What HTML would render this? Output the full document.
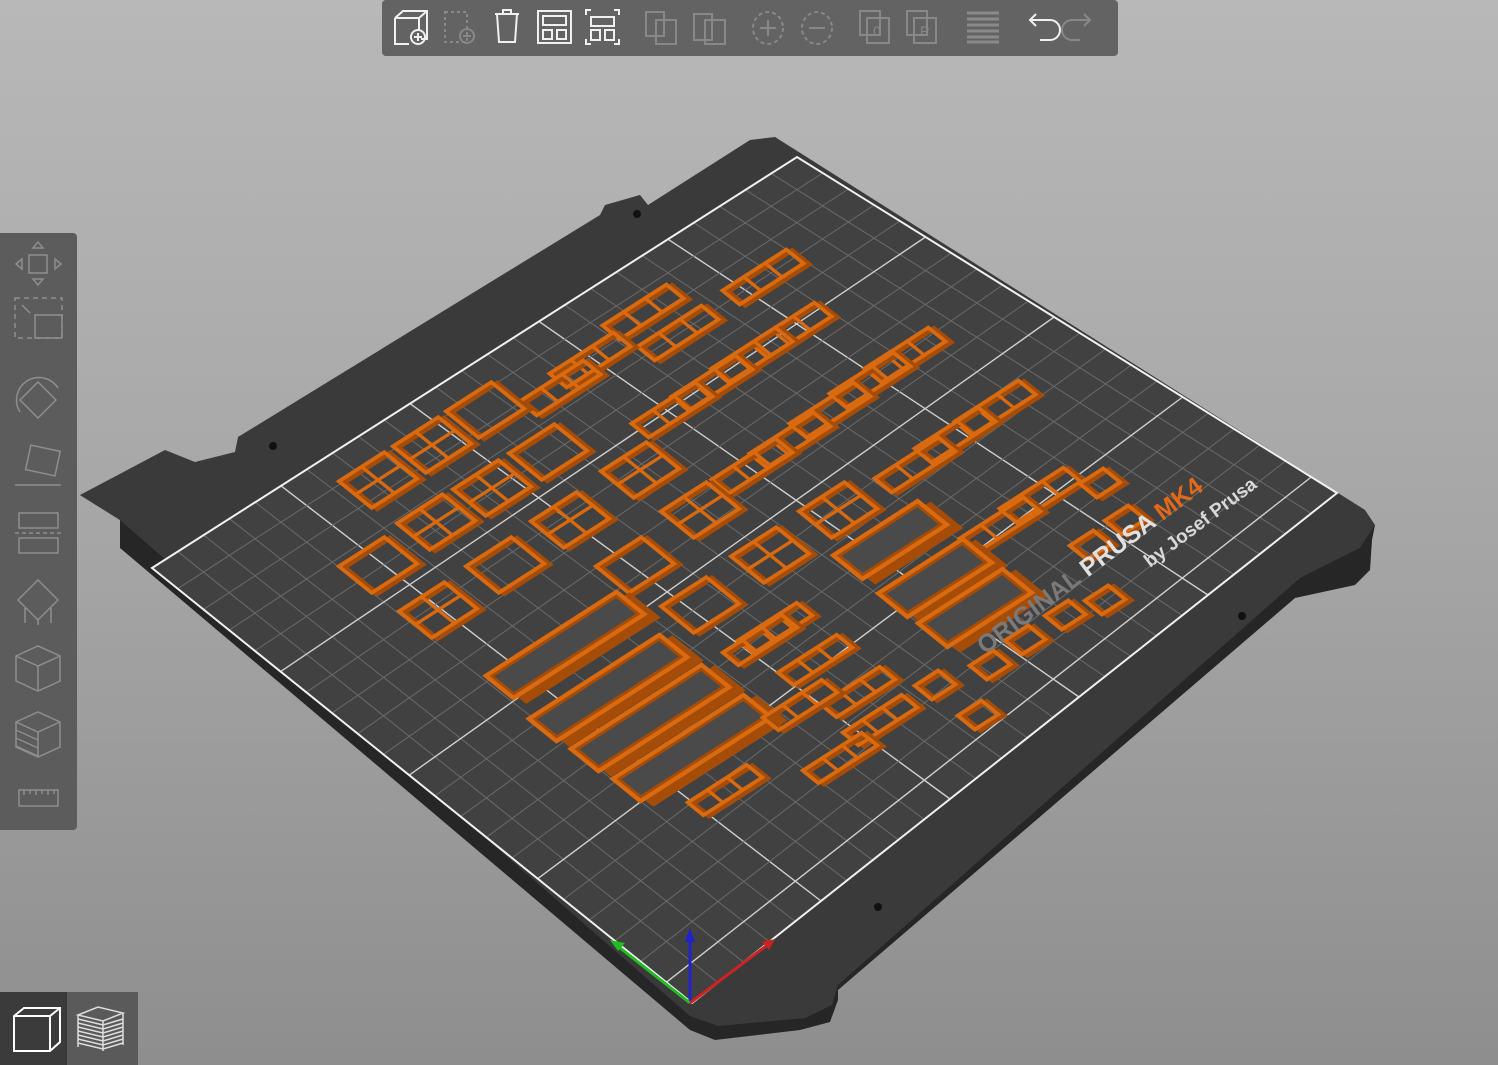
<!DOCTYPE html>
<html><head><meta charset="utf-8"><style>
html,body{margin:0;padding:0;width:1498px;height:1065px;overflow:hidden;font-family:"Liberation Sans",sans-serif}
body{background:linear-gradient(#b8b8b8,#a6a6a6 50%,#8e8e8e)}
svg{position:absolute;left:0;top:0}
</style></head><body>
<svg id="s" width="1498" height="1065" viewBox="0 0 1498 1065">
<polygon fill="#262626" points="80,495 120,520 120,548 690,1030 715,1040 800,1030 830,1022 838,1000 838,990 1295,598 1355,585 1370,570 1372,540 1375,525"/>
<polygon fill="#3a3a3a" points="80,495 165,450 195,462 235,452 238,437 600,215 605,205 640,195 648,205 750,140 775,137 1365,510 1375,525 1365,540 1360,548 1300,578 838,985 832,1005 805,1018 718,1026 690,1016 120,520"/>
<polygon id="print" fill="#414141" points="152,568 797,157 1337,493 692,1003"/>
<g id="grid"></g>
<g id="objs"></g>
<text x="0" y="0" transform="translate(985,655) rotate(-37)" font-size="25" font-weight="bold" fill="#7a7a7a">ORIGINAL <tspan fill="#e0e0e0">PRUSA </tspan><tspan fill="#e06a1a">MK4</tspan></text>
<text x="0" y="0" transform="translate(1150,568) rotate(-37)" font-size="19" font-weight="bold" fill="#d8d8d8">by Josef Prusa</text>
<circle cx="637" cy="214" r="4" fill="#111"/><circle cx="273" cy="446" r="4" fill="#111"/>
<circle cx="1242" cy="616" r="4" fill="#111"/><circle cx="878" cy="907" r="4" fill="#111"/>
<line x1="690" y1="1003" x2="690" y2="935" stroke="#2222cc" stroke-width="3"/><polygon points="690,928 685,942 695,942" fill="#2222cc"/>
<line x1="690" y1="1003" x2="615" y2="944" stroke="#22bb22" stroke-width="3"/><polygon points="610,940 625,943 618,951" fill="#22bb22"/>
<line x1="690" y1="1003" x2="770" y2="943" stroke="#cc2222" stroke-width="3"/><polygon points="775,939 762,942 769,950" fill="#cc2222"/>
<rect x="382" y="0" width="736" height="56" rx="4" fill="#636363"/>
<g fill="none" stroke="#f0f0f0" stroke-width="2">
<path d="M395 18 l8-7 h24 v28 l-6 0 M395 18 h24 l8-7 M419 18 v13 M395 18 v26 h14"/><circle cx="418" cy="37" r="7"/><path d="M414 37h8M418 33v8"/>
<path d="M495 14h24M503 14v-4h8v4M497 14l2 28h16l2-28"/>
<rect x="538" y="11" width="33" height="32"/><rect x="543" y="16" width="23" height="9"/><rect x="543" y="30" width="9" height="9"/><rect x="557" y="30" width="9" height="9"/>
<path d="M586 15v-5h5M614 10h5v5M586 39v5h5M614 44h5v-5"/><rect x="591" y="17" width="23" height="9"/><rect x="591" y="30" width="9" height="10"/><rect x="605" y="30" width="9" height="10"/>
<path d="M1030 20h20a10 10 0 0 1 0 20h-10M1036 14l-6 6 6 6"/>
</g>
<g fill="none" stroke="#888" stroke-width="2">
<rect x="445" y="12" width="22" height="30" stroke-dasharray="3 3"/><circle cx="467" cy="36" r="7"/><path d="M463 36h8"/>
<rect x="646" y="12" width="18" height="24"/><rect x="656" y="20" width="20" height="24"/>
<rect x="694" y="14" width="18" height="26"/><rect x="705" y="20" width="20" height="24"/>
<ellipse cx="768" cy="28" rx="15" ry="16" stroke-dasharray="4 3"/><path d="M760 28h16M768 20v16"/>
<ellipse cx="817" cy="28" rx="15" ry="16" stroke-dasharray="4 3"/><path d="M809 28h16"/>
<rect x="860" y="11" width="20" height="24"/><rect x="867" y="18" width="22" height="25"/>
<rect x="907" y="11" width="20" height="24"/><rect x="914" y="18" width="22" height="25"/>
<path d="M1090 20h-18a10 10 0 0 0 0 20h8M1084 14l6 6-6 6"/>
</g>
<g stroke="#8a8a8a" stroke-width="3"><path d="M967 13h32M967 19h32M967 25h32M967 31h32M967 37h32M967 42h32"/></g>
<text x="873" y="36" font-size="14" fill="#888">0</text><text x="920" y="36" font-size="14" fill="#888">P</text>
<rect x="-6" y="233" width="83" height="597" rx="4" fill="#5c5c5c"/>
<g fill="none" stroke="#8e8e8e" stroke-width="1.5">
<rect x="29" y="255" width="18" height="18"/><path d="M38 242l-5 6h10zM38 285l-5-6h10zM16 264l6-5v10zM61 264l-6-5v10z"/>
<rect x="15" y="298" width="47" height="40" stroke-dasharray="5 4"/><rect x="35" y="315" width="27" height="23"/><path d="M22 305l8 8"/>
<path d="M20 412a22 22 0 0 1 38-24"/><path d="M38 382l18 18-18 18-18-18z"/>
<rect x="28" y="448" width="30" height="25" transform="rotate(12 43 460)"/><path d="M15 485h46"/>
<rect x="19" y="513" width="39" height="15"/><rect x="19" y="538" width="39" height="15"/><path d="M15 533h47" stroke-dasharray="4 3"/>
<path d="M38 580l20 20-20 20-20-20zM25 608v15M38 620v5M51 608v15"/>
<path d="M16 656l22-10 22 10v25l-22 10-22-10zM16 656l22 10 22-10M38 666v25"/>
<path d="M16 722l22-10 22 10v25l-22 10-22-10zM16 722l22 10 22-10M38 732v25M16 730l22 10M16 738l22 10M16 746l22 10"/>
<rect x="19" y="790" width="39" height="16"/><path d="M24 790v5M30 790v4M36 790v5M42 790v4M48 790v5M54 790v4"/>
</g>
<rect x="0" y="992" width="138" height="73" fill="#5a5a5a"/><rect x="0" y="992" width="67" height="73" fill="#3b3b3b"/>
<g fill="none" stroke="#fff" stroke-width="2"><path d="M14 1016l10-8h36v34l-10 9H14zM14 1016h36l10-8M50 1016v35"/></g>
<g fill="none" stroke="#ddd" stroke-width="1.5"><path d="M78 1015l20-8 25 6-20 8zM78 1019l25 6 20-6M78 1023l25 6 20-6M78 1027l25 6 20-6M78 1031l25 6 20-6M78 1035l25 6 20-6M78 1039l25 6 20-6M78 1043l25 6 20-6M78 1015v32M123 1013v32M103 1021v30"/></g>
</svg>
<script>
var L=[152,568],T=[797,157],B=[692,1003],R=[1337,493];
function P(s,t){return [L[0]*(1-s)*(1-t)+T[0]*s*(1-t)+B[0]*(1-s)*t+R[0]*s*t,L[1]*(1-s)*(1-t)+T[1]*s*(1-t)+B[1]*(1-s)*t+R[1]*s*t];}
var g=document.getElementById("grid"),h="";
function ln(a,b,c,w){h+='<line x1="'+a[0]+'" y1="'+a[1]+'" x2="'+b[0]+'" y2="'+b[1]+'" stroke="'+c+'" stroke-width="'+w+'"/>';}
for(var i=0;i<=25;i++){var s=i/25;ln(P(s,0),P(s,1),i%5==0?"#cfcfcf":"#6a6a6a",i%5==0?1.4:1);}
for(var j=0;j<=21;j++){var t=j/21;ln(P(0,t),P(1,t),j%5==0?"#cfcfcf":"#6a6a6a",j%5==0?1.4:1);}
h+='<polygon points="'+[L,T,R,B].map(function(p){return p.join(",")}).join(" ")+'" fill="none" stroke="#f0f0f0" stroke-width="2"/>';
g.innerHTML=h;
var O="#d96a10",OD="#a44c08";
var o="";
function fr(x,y,w,hh,n,m){
 var q='<g transform="translate('+x+','+y+') matrix(0.84,-0.54,0.78,0.63,0,0)">';
 q+='<rect x="'+(-w/2+3)+'" y="'+(-hh/2+4)+'" width="'+w+'" height="'+hh+'" fill="none" stroke="'+OD+'" stroke-width="5"/>';
 q+='<rect x="'+(-w/2)+'" y="'+(-hh/2)+'" width="'+w+'" height="'+hh+'" fill="none" stroke="'+O+'" stroke-width="4"/>';
 for(var k=1;k<n;k++){var xx=-w/2+w*k/n;q+='<line x1="'+xx+'" y1="'+(-hh/2)+'" x2="'+xx+'" y2="'+(hh/2)+'" stroke="'+O+'" stroke-width="3.5"/>';}
 for(var k=1;k<m;k++){var yy=-hh/2+hh*k/m;q+='<line x1="'+(-w/2)+'" y1="'+yy+'" x2="'+(w/2)+'" y2="'+yy+'" stroke="'+O+'" stroke-width="3.5"/>';}
 return q+'</g>';}
function tray(x,y,w,hh){
 var q='<g transform="translate('+x+','+y+') matrix(0.84,-0.54,0.78,0.63,0,0)">';
 q+='<rect x="'+(-w/2)+'" y="'+(-hh/2)+'" width="'+w+'" height="'+hh+'" fill="'+OD+'" transform="translate(6,10)"/>';
 q+='<rect x="'+(-w/2)+'" y="'+(-hh/2)+'" width="'+w+'" height="'+hh+'" fill="'+O+'"/>';
 q+='<rect x="'+(-w/2+6)+'" y="'+(-hh/2+6)+'" width="'+(w-12)+'" height="'+(hh-12)+'" fill="#4a4a4a" stroke="'+OD+'" stroke-width="3"/>';
 return q+'</g>';}
var strips=[[763,277],[643,312],[678,333],[590,360],[791,330],[752,355],[712,383],[672,410],[905,355],[870,380],[830,410],[790,440],[752,466],[995,408],[955,435],[915,465],[1040,495],[1000,525],[560,388]];
strips.forEach(function(p){o+=fr(p[0],p[1],76,22,3,1);});
var wins=[[485,410],[432,445],[378,480],[548,452],[492,488],[436,522],[378,565],[570,520],[438,610],[505,565],[640,470],[700,510],[635,565],[838,510],[770,555],[700,605]];
wins.forEach(function(p,i){o+=fr(p[0],p[1],54,42,i%3==0?1:2,i%3==0?1:2);});
[[565,645],[608,688],[650,718],[692,748]].forEach(function(p){o+=tray(p[0],p[1],160,40);});
[[890,540],[935,578],[975,608]].forEach(function(p){o+=tray(p[0],p[1],105,42);});
[[775,628],[815,660],[858,692],[725,790],[760,640],[800,705],[880,720],[840,758]].forEach(function(p){o+=fr(p[0],p[1],70,20,3,1);});
[[1100,483],[1105,600],[1065,615],[1025,640],[990,665],[935,685],[978,715],[1125,520],[1090,545]].forEach(function(p){o+=fr(p[0],p[1],28,22,1,1);});
document.getElementById("objs").innerHTML=o;
</script>
</body></html>
